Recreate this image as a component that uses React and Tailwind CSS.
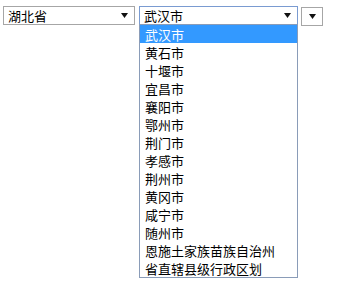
const cities = [
  "武汉市",
  "黄石市",
  "十堰市",
  "宜昌市",
  "襄阳市",
  "鄂州市",
  "荆门市",
  "孝感市",
  "荆州市",
  "黄冈市",
  "咸宁市",
  "随州市",
  "恩施土家族苗族自治州",
  "省直辖县级行政区划",
];

function Arrow() {
  return (
    <svg width="7" height="5" viewBox="0 0 7 5" className="shrink-0">
      <polygon points="0,0 7,0 3.5,5" fill="#111" />
    </svg>
  );
}

function SelectBox({ value, width, focused }) {
  return (
    <div
      className={`h-[19px] ${width} flex items-center justify-between pl-[4px] pr-[6px] bg-white border ${
        focused ? "border-[#7a9bd1]" : "border-[#a6a6a6]"
      }`}
    >
      <span className="text-[13px] leading-none text-black">{value}</span>
      <Arrow />
    </div>
  );
}

export default function App() {
  return (
    <div
      className="w-[350px] h-[282px] bg-white pt-[6px] pl-[3px] flex items-start"
      style={{ fontFamily: '"Noto Sans CJK SC", "Noto Sans", sans-serif' }}
    >
      <SelectBox value="湖北省" width="w-[132px]" />

      {/* City select with open list */}
      <div className="relative ml-[4px]">
        <SelectBox value="武汉市" width="w-[159px]" focused />
        <ul className="absolute left-0 top-[18px] w-[159px] bg-white border border-[#8a9cb8]">
          {cities.map((c, i) => (
            <li
              key={c}
              className={`h-[18px] pl-[5px] flex items-center text-[13px] leading-none ${
                i === 0 ? "bg-[#3399ff] text-white" : "text-black"
              }`}
            >
              {c}
            </li>
          ))}
        </ul>
      </div>

      <div className="ml-[3px] mt-[1px] h-[19px] w-[22px] flex items-center justify-center bg-white border border-[#a6a6a6]">
        <Arrow />
      </div>
    </div>
  );
}
